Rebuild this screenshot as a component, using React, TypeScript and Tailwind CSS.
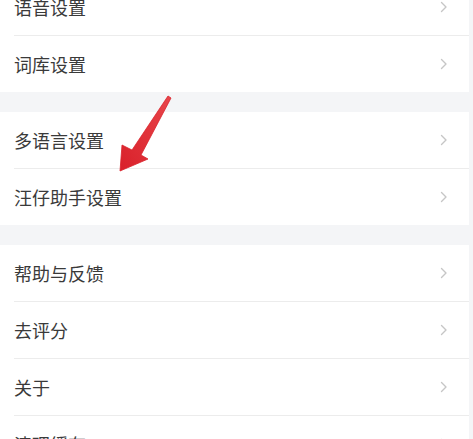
import React from "react";

interface RowItem {
  title: string;
  value?: string;
}

const groups: { items: RowItem[]; gap: string }[] = [
  { items: [{ title: "语音设置" }, { title: "词库设置" }], gap: "-mt-[21px]" },
  { items: [{ title: "多语言设置" }, { title: "汪仔助手设置" }], gap: "mt-[20px]" },
  {
    items: [
      { title: "帮助与反馈" },
      { title: "去评分" },
      { title: "关于" },
      { title: "清理缓存", value: "12.6MB" },
    ],
    gap: "mt-[20px]",
  },
];

const Chevron = () => (
  <svg width="8" height="12" viewBox="0 0 8 12" className="shrink-0">
    <path
      d="M1.5 1.5 L6 6 L1.5 10.5"
      fill="none"
      stroke="#c6c6c6"
      strokeWidth="1.4"
      strokeLinecap="round"
      strokeLinejoin="round"
    />
  </svg>
);

const Row = ({ item, last }: { item: RowItem; last: boolean }) => (
  <div className="pl-[14px]">
    <div
      className={`box-content flex h-[56px] items-center justify-between pr-[21px] ${
        last ? "" : "border-b border-[#ececec]"
      }`}
    >
      <span className="text-[18px] text-[#3a3a3a]">{item.title}</span>
      <div className="flex items-center gap-2">
        {item.value && (
          <span className="text-[14px] text-[#a8a8a8]">{item.value}</span>
        )}
        <Chevron />
      </div>
    </div>
  </div>
);

export default function App() {
  return (
    <div
      className="relative h-[439px] w-[473px] overflow-hidden bg-[#f4f5f7]"
      style={{ fontFamily: '"Noto Sans CJK SC", "Noto Sans", sans-serif' }}
    >
      <div className="pr-[4px]">
        {groups.map((g, gi) => (
          <div key={gi} className={`${g.gap} bg-white`}>
            {g.items.map((item, i) => (
              <Row key={item.title} item={item} last={i === g.items.length - 1} />
            ))}
          </div>
        ))}
      </div>

      {/* red pointer arrow */}
      <svg
        className="absolute left-[110px] top-[92px]"
        width="66"
        height="84"
        viewBox="0 0 66 84"
      >
        <defs>
          <linearGradient id="arw" x1="1" y1="0" x2="0" y2="1">
            <stop offset="0" stopColor="#e8454a" />
            <stop offset="1" stopColor="#d9202a" />
          </linearGradient>
        </defs>
        <polygon
          points="10,79 12,53 22,58 58,4 61,6 31,63 38,67"
          fill="url(#arw)"
          stroke="#d9222b"
          strokeWidth="0.8"
          strokeLinejoin="round"
        />
      </svg>
    </div>
  );
}
